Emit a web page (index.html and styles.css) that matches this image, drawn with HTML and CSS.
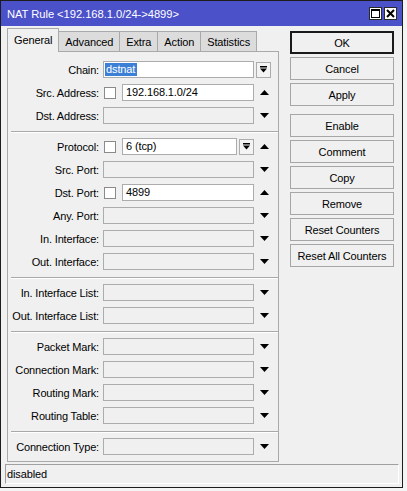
FILE: index.html
```html
<!DOCTYPE html>
<html>
<head>
<meta charset="utf-8">
<link rel="stylesheet" href="styles.css">
</head>
<body>
<div class="window">
  <div class="titlebar">
    <span class="title">NAT Rule &lt;192.168.1.0/24-&gt;4899&gt;</span>
    <div class="tb-btns">
      <span class="tb-btn"><svg width="11" height="11" viewBox="0 0 11 11"><rect x="1.5" y="1.5" width="8" height="8" fill="none" stroke="#000" stroke-width="1"/><rect x="1" y="1" width="9" height="2" fill="#000"/></svg></span>
      <span class="tb-btn"><svg width="11" height="11" viewBox="0 0 11 11"><path d="M2 2 L9 9 M9 2 L2 9" stroke="#000" stroke-width="2"/></svg></span>
    </div>
  </div>
  <div class="main">
    <div class="left">
      <div class="tabs">
        <span class="tab active">General</span>
        <span class="tab">Advanced</span>
        <span class="tab">Extra</span>
        <span class="tab">Action</span>
        <span class="tab">Statistics</span>
      </div>
      <div class="panel">
        <div class="row">
          <span class="label">Chain:</span>
          <div class="field"><div class="box val"><span class="sel">dstnat</span></div></div>
          <div class="arrow start"><span class="ddbtn"><svg width="7" height="7" viewBox="0 0 7 7"><rect x="0" y="0" width="7" height="1.5" fill="#000"/><path d="M0 2.5 H7 L3.5 6.5 Z" fill="#000"/></svg></span></div>
        </div>
        <div class="row">
          <span class="label">Src. Address:</span>
          <div class="field"><span class="cb"></span><div class="box val">192.168.1.0/24</div></div>
          <div class="arrow"><svg class="up" width="9" height="5" viewBox="0 0 9 5"><path d="M0 5 L4.5 0 L9 5 Z" fill="#000"/></svg></div>
        </div>
        <div class="row">
          <span class="label">Dst. Address:</span>
          <div class="field"><div class="box"></div></div>
          <div class="arrow"><svg width="9" height="5" viewBox="0 0 9 5"><path d="M0 0 L9 0 L4.5 5 Z" fill="#000"/></svg></div>
        </div>
        <div class="sep"></div>
        <div class="row">
          <span class="label">Protocol:</span>
          <div class="field"><span class="cb"></span><div class="box val">6 (tcp)</div><span class="ddbtn inrow"><svg width="7" height="7" viewBox="0 0 7 7"><rect x="0" y="0" width="7" height="1.5" fill="#000"/><path d="M0 2.5 H7 L3.5 6.5 Z" fill="#000"/></svg></span></div>
          <div class="arrow"><svg width="9" height="5" viewBox="0 0 9 5"><path d="M0 5 L4.5 0 L9 5 Z" fill="#000"/></svg></div>
        </div>
        <div class="row">
          <span class="label">Src. Port:</span>
          <div class="field"><div class="box"></div></div>
          <div class="arrow"><svg width="9" height="5" viewBox="0 0 9 5"><path d="M0 0 L9 0 L4.5 5 Z" fill="#000"/></svg></div>
        </div>
        <div class="row">
          <span class="label">Dst. Port:</span>
          <div class="field"><span class="cb"></span><div class="box val">4899</div></div>
          <div class="arrow"><svg width="9" height="5" viewBox="0 0 9 5"><path d="M0 5 L4.5 0 L9 5 Z" fill="#000"/></svg></div>
        </div>
        <div class="row">
          <span class="label">Any. Port:</span>
          <div class="field"><div class="box"></div></div>
          <div class="arrow"><svg width="9" height="5" viewBox="0 0 9 5"><path d="M0 0 L9 0 L4.5 5 Z" fill="#000"/></svg></div>
        </div>
        <div class="row">
          <span class="label">In. Interface:</span>
          <div class="field"><div class="box"></div></div>
          <div class="arrow"><svg width="9" height="5" viewBox="0 0 9 5"><path d="M0 0 L9 0 L4.5 5 Z" fill="#000"/></svg></div>
        </div>
        <div class="row">
          <span class="label">Out. Interface:</span>
          <div class="field"><div class="box"></div></div>
          <div class="arrow"><svg width="9" height="5" viewBox="0 0 9 5"><path d="M0 0 L9 0 L4.5 5 Z" fill="#000"/></svg></div>
        </div>
        <div class="sep"></div>
        <div class="row">
          <span class="label">In. Interface List:</span>
          <div class="field"><div class="box"></div></div>
          <div class="arrow"><svg width="9" height="5" viewBox="0 0 9 5"><path d="M0 0 L9 0 L4.5 5 Z" fill="#000"/></svg></div>
        </div>
        <div class="row">
          <span class="label">Out. Interface List:</span>
          <div class="field"><div class="box"></div></div>
          <div class="arrow"><svg width="9" height="5" viewBox="0 0 9 5"><path d="M0 0 L9 0 L4.5 5 Z" fill="#000"/></svg></div>
        </div>
        <div class="sep"></div>
        <div class="row">
          <span class="label">Packet Mark:</span>
          <div class="field"><div class="box"></div></div>
          <div class="arrow"><svg width="9" height="5" viewBox="0 0 9 5"><path d="M0 0 L9 0 L4.5 5 Z" fill="#000"/></svg></div>
        </div>
        <div class="row">
          <span class="label">Connection Mark:</span>
          <div class="field"><div class="box"></div></div>
          <div class="arrow"><svg width="9" height="5" viewBox="0 0 9 5"><path d="M0 0 L9 0 L4.5 5 Z" fill="#000"/></svg></div>
        </div>
        <div class="row">
          <span class="label">Routing Mark:</span>
          <div class="field"><div class="box"></div></div>
          <div class="arrow"><svg width="9" height="5" viewBox="0 0 9 5"><path d="M0 0 L9 0 L4.5 5 Z" fill="#000"/></svg></div>
        </div>
        <div class="row">
          <span class="label">Routing Table:</span>
          <div class="field"><div class="box"></div></div>
          <div class="arrow"><svg width="9" height="5" viewBox="0 0 9 5"><path d="M0 0 L9 0 L4.5 5 Z" fill="#000"/></svg></div>
        </div>
        <div class="sep"></div>
        <div class="row">
          <span class="label">Connection Type:</span>
          <div class="field"><div class="box"></div></div>
          <div class="arrow"><svg width="9" height="5" viewBox="0 0 9 5"><path d="M0 0 L9 0 L4.5 5 Z" fill="#000"/></svg></div>
        </div>
      </div>
    </div>
    <div class="buttons">
      <span class="btn default">OK</span>
      <span class="btn">Cancel</span>
      <span class="btn">Apply</span>
      <span class="btn gap">Enable</span>
      <span class="btn">Comment</span>
      <span class="btn">Copy</span>
      <span class="btn">Remove</span>
      <span class="btn">Reset Counters</span>
      <span class="btn">Reset All Counters</span>
    </div>
  </div>
  <div class="status">disabled</div>
</div>
</body>
</html>
```

FILE: styles.css
```css
html, body {
  margin: 0;
  padding: 0;
}
body {
  background: #f4f4f4;
  font-family: "Liberation Sans", Arial, sans-serif;
  font-size: 11px;
  letter-spacing: -0.12px;
  color: #000;
  width: 407px;
  height: 491px;
  overflow: hidden;
}
.window {
  width: 403px;
  height: 488px;
  box-sizing: border-box;
  border: 1px solid #1c1c1c;
  background: #f0f0f0;
  display: flex;
  flex-direction: column;
}
.titlebar {
  height: 25px;
  flex: none;
  background: #4b51c9;
  color: #fff;
  display: flex;
  align-items: center;
  justify-content: space-between;
  padding: 0 5px 0 6px;
}
.title {
  font-size: 11.2px;
  letter-spacing: -0.05px;
}
.tb-btns {
  display: flex;
  gap: 2px;
}
.tb-btn {
  width: 13px;
  height: 13px;
  box-sizing: border-box;
  border: 1px solid #2a2a2a;
  background: #fff;
  display: flex;
  align-items: center;
  justify-content: center;
}
.tb-btn svg {
  display: block;
}
.main {
  display: flex;
  padding: 2px 0 0 6px;
}
.left {
  width: 272px;
  display: flex;
  flex-direction: column;
}
.tabs {
  display: flex;
  align-items: flex-end;
  height: 23px;
  position: relative;
  z-index: 1;
}
.tab {
  height: 20px;
  box-sizing: border-box;
  border: 1px solid #a9a9a9;
  border-bottom: none;
  background: #dcdcdc;
  padding: 0 6px;
  margin-right: -1px;
  display: flex;
  align-items: center;
}
.tab.active {
  height: 24px;
  margin-bottom: -1px;
  background: #f0f0f0;
  padding: 0 6px 2px;
}
.panel {
  border: 1px solid #a9a9a9;
  padding: 6px 0 3px 0;
}
.row {
  height: 23px;
  display: flex;
  align-items: center;
}
.label {
  width: 95px;
  box-sizing: border-box;
  padding-right: 4px;
  text-align: right;
  white-space: nowrap;
  letter-spacing: -0.16px;
}
.field {
  width: 151px;
  display: flex;
  align-items: center;
}
.box {
  flex: 1;
  height: 17px;
  box-sizing: border-box;
  border: 1px solid #acacac;
  background: #f0f0f0;
  padding-left: 3px;
  line-height: 15px;
  white-space: nowrap;
}
.box.val {
  background: #fff;
}
.sel {
  background: #3c7fd6;
  color: #fff;
  padding: 0 2px 1px 1px;
  margin-left: -2px;
}
.cb {
  width: 12px;
  height: 12px;
  box-sizing: border-box;
  border: 1px solid #8a8a8a;
  background: #fff;
  margin: 0 6px 0 1px;
}
.arrow {
  width: 21px;
  display: flex;
  justify-content: center;
  align-items: center;
}
.arrow.start {
  justify-content: flex-start;
  padding-left: 2px;
  box-sizing: border-box;
}
.arrow svg {
  display: block;
}
.ddbtn {
  width: 15px;
  height: 16px;
  box-sizing: border-box;
  border: 1px solid #acacac;
  background: #f4f4f4;
  display: flex;
  align-items: center;
  justify-content: center;
}
.ddbtn svg {
  display: block;
}
.ddbtn.inrow {
  margin-left: 2px;
}
.sep {
  height: 8px;
  box-sizing: border-box;
  margin-left: 3px;
  border-top: 4px solid transparent;
}
.sep::before {
  content: "";
  display: block;
  height: 1px;
  background: #a9a9a9;
  border-bottom: 1px solid #fff;
}
.buttons {
  margin-left: 11px;
  width: 104px;
  padding-top: 3px;
  display: flex;
  flex-direction: column;
  gap: 3px;
}
.btn {
  height: 23px;
  box-sizing: border-box;
  border: 1px solid #a6a6a6;
  background: #f0f0f0;
  display: flex;
  align-items: center;
  justify-content: center;
  white-space: nowrap;
}
.btn.default {
  border: 2px solid #1a1a1a;
}
.btn.gap {
  margin-top: 5px;
}
.status {
  margin: 2px 3px 0 4px;
  height: 20px;
  box-sizing: border-box;
  border-top: 1px solid #a0a0a0;
  border-left: 1px solid #a0a0a0;
  border-bottom: 1px solid #fff;
  border-right: 1px solid #fff;
  padding-left: 1px;
  line-height: 18px;
}
```
